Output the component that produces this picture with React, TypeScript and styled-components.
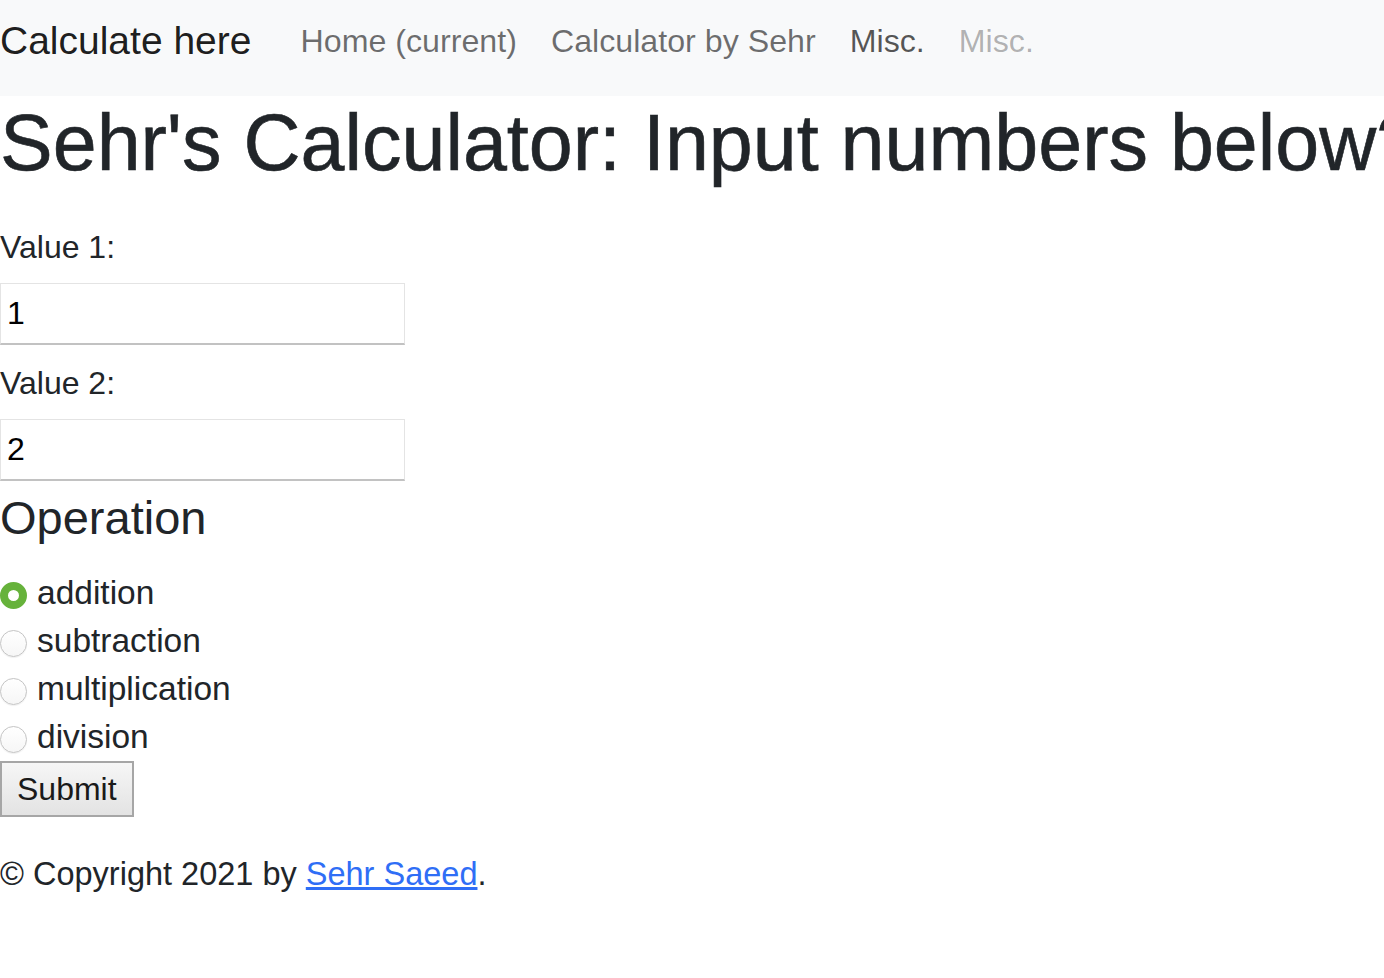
import React from "react";
import styled, { createGlobalStyle } from "styled-components";

const GlobalStyle = createGlobalStyle`
  html, body {
    margin: 0;
    padding: 0;
    background: #ffffff;
    overflow-x: hidden;
  }
  body {
    font-family: "Liberation Sans", Arial, Helvetica, sans-serif;
    color: #212529;
    font-size: 32px;
    line-height: 1.5;
  }
  * { box-sizing: border-box; }
`;

const Navbar = styled.nav`
  display: flex;
  align-items: flex-start;
  height: 96px;
  padding-top: 12px;
  background: #f8f9fa;
  white-space: nowrap;
`;

const Brand = styled.a`
  font-size: 39px;
  line-height: 1.5;
  color: rgba(0, 0, 0, 0.9);
  text-decoration: none;
  margin-right: 32px;
`;

const NavList = styled.ul`
  display: flex;
  list-style: none;
  margin: 0;
  padding: 0;
  padding-top: 5px;
`;

const NavLink = styled.a<{ $tone: "normal" | "active" | "disabled" }>`
  display: block;
  font-size: 32.2px;
  line-height: 1.5;
  padding: 0 17px;
  text-decoration: none;
  color: ${(p) =>
    p.$tone === "active"
      ? "rgba(0, 0, 0, 0.66)"
      : p.$tone === "disabled"
      ? "rgba(0, 0, 0, 0.3)"
      : "rgba(0, 0, 0, 0.57)"};
`;

const Main = styled.main`
  display: flex;
  flex-direction: column;
  align-items: flex-start;
`;

const Title = styled.h1`
  margin: 0 0 32px;
  font-size: 79px;
  font-weight: 400;
  line-height: 1.2;
  white-space: nowrap;
  color: #212529;
  -webkit-text-stroke: 0.6px #212529;
`;

const Form = styled.form`
  display: flex;
  flex-direction: column;
  align-items: flex-start;
`;

const Label = styled.label`
  display: block;
  font-size: 32px;
  line-height: 48px;
  margin-bottom: 12px;
`;

const TextInput = styled.input`
  width: 405px;
  height: 62px;
  margin: 0 0 14px;
  padding: 0 6px;
  font-family: "Liberation Sans", Arial, sans-serif;
  font-size: 32px;
  color: #000;
  background: #fff;
  border: 1px solid #e4e4e4;
  border-bottom: 2px solid #c2c2c2;
  border-radius: 0;
  outline: none;
`;

const SectionTitle = styled.h4`
  margin: -5px 0 23px;
  font-size: 47px;
  font-weight: 400;
  line-height: 1.2;
  color: #212529;
`;

const RadioRow = styled.label`
  display: flex;
  align-items: center;
  gap: 10px;
  font-size: 33.5px;
  line-height: 48px;
  color: #212529;
`;

const Radio = styled.input`
  appearance: none;
  -webkit-appearance: none;
  width: 27px;
  height: 27px;
  margin: 5px 0 0;
  border-radius: 50%;
  border: 1px solid #c4c4c4;
  background: linear-gradient(#ffffff, #f6f6f6);
  box-shadow: 0 1px 1px rgba(0, 0, 0, 0.06);
  flex: none;

  &:checked {
    border: 8px solid #66b23b;
    background: #ffffff;
    box-shadow: none;
  }
`;

const SubmitButton = styled.button`
  height: 56px;
  padding: 0 15px;
  font-family: "Liberation Sans", Arial, sans-serif;
  font-size: 32px;
  color: #1a1a1a;
  background: linear-gradient(#f6f6f6, #e3e3e3);
  border: 2px solid #a6a6a6;
  border-radius: 0;
  margin-bottom: 33px;
`;

const Footer = styled.p`
  margin: 0;
  font-size: 32.5px;
  line-height: 48px;
  color: #212529;
`;

const FooterLink = styled.a`
  color: #2f6ef6;
  text-decoration: underline;
`;

const ops = ["addition", "subtraction", "multiplication", "division"];

export default function App() {
  return (
    <>
      <GlobalStyle />
      <Navbar>
        <Brand href="#">Calculate here</Brand>
        <NavList>
          <li>
            <NavLink href="#" $tone="normal">Home (current)</NavLink>
          </li>
          <li>
            <NavLink href="#" $tone="normal">Calculator by Sehr</NavLink>
          </li>
          <li>
            <NavLink href="#" $tone="active">Misc.</NavLink>
          </li>
          <li>
            <NavLink href="#" $tone="disabled">Misc.</NavLink>
          </li>
        </NavList>
      </Navbar>
      <Main>
        <Title>Sehr's Calculator: Input numbers below?</Title>
        <Form onSubmit={(e) => e.preventDefault()}>
          <Label htmlFor="v1">Value 1:</Label>
          <TextInput id="v1" type="text" defaultValue="1" />
          <Label htmlFor="v2">Value 2:</Label>
          <TextInput id="v2" type="text" defaultValue="2" />
          <SectionTitle>Operation</SectionTitle>
          {ops.map((op, i) => (
            <RadioRow key={op}>
              <Radio type="radio" name="op" value={op} defaultChecked={i === 0} />
              {op}
            </RadioRow>
          ))}
          <SubmitButton type="submit">Submit</SubmitButton>
        </Form>
        <Footer>
          © Copyright 2021 by <FooterLink href="#">Sehr Saeed</FooterLink>.
        </Footer>
      </Main>
    </>
  );
}
